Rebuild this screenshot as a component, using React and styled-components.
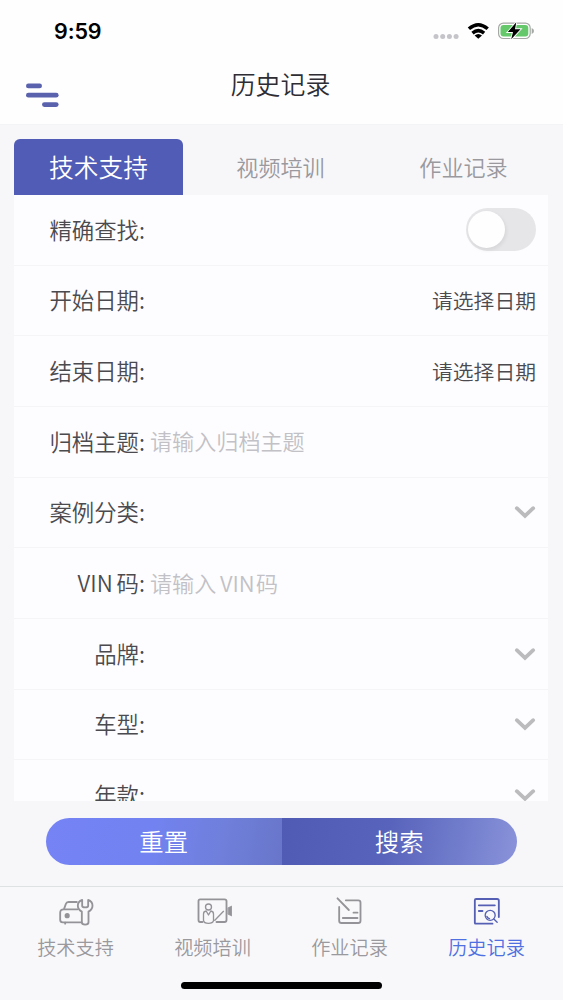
import styled, { createGlobalStyle } from 'styled-components';
import { useState } from 'react';

const GlobalStyle = createGlobalStyle`
  * {
    box-sizing: border-box;
  }
  body {
    margin: 0;
    font-family: 'Noto Sans CJK SC DemiLight', 'Noto Sans CJK SC', sans-serif;
    font-weight: 350;
  }
`;

const Container = styled.div`
  width: 563px;
  height: 1000px;
  display: flex;
  flex-direction: column;
  overflow: hidden;
  background-color: #f7f7fa;
`;

const StatusBar = styled.div`
  height: 62px;
  flex-shrink: 0;
  display: flex;
  justify-content: space-between;
  padding: 0 29px 0 54px;
  background-color: #fefeff;
`;
const Time = styled.span`
  font-family: Inter, sans-serif;
  font-size: 21.5px;
  font-weight: 600;
  line-height: 62px;
  letter-spacing: -0.1px;
  color: #000;
`;
const StatusIcons = styled.svg`
  width: 102px;
  height: 20px;
  margin-top: 21px;
`;

const Header = styled.header`
  height: 63px;
  flex-shrink: 0;
  display: grid;
  grid-template-columns: 80px 1fr 82px;
  background-color: #fefeff;
  border-bottom: 1px solid #f3f4f5;
`;
const MenuButton = styled.button`
  display: flex;
  padding: 21px 0 0 26px;
  border: none;
  background: none;
`;
const Title = styled.h1`
  margin: 0;
  font-size: 24.9px;
  font-weight: 350;
  line-height: 43px;
  text-align: center;
  color: #2e2d33;
`;

const Tabs = styled.div`
  height: 70px;
  flex-shrink: 0;
  display: flex;
  padding: 14px 0 0 14px;
`;
const Tab = styled.button`
  width: ${(props) => (props.$active ? '169px' : '183px')};
  padding: 0 0 2px;
  margin-left: ${(props) => props.$gap || '0'};
  border: none;
  border-radius: 6px 6px 0 0;
  font-family: inherit;
  font-weight: 350;
  font-size: ${(props) => (props.$active ? '24.7px' : '22.1px')};
  color: ${(props) => (props.$active ? '#fff' : '#9a999e')};
  background: ${(props) => (props.$active ? '#505cb5' : 'none')};
`;

const Form = styled.div`
  height: 606px;
  flex-shrink: 0;
  margin: 0 15px 0 14px;
  overflow: hidden;
  background-color: #fdfdff;
`;
const Row = styled.div`
  height: 70.67px;
  display: flex;
  align-items: center;
  padding-right: 12px;
  border-bottom: 1.5px solid #f5f5f8;
`;
const Label = styled.label`
  width: 131px;
  flex-shrink: 0;
  padding-bottom: 2px;
  font-size: 22.4px;
  text-align: right;
  color: #4b4a4e;
`;
const Input = styled.input`
  flex: 1;
  min-width: 0;
  padding: 0 0 3px;
  margin-left: 5px;
  border: none;
  outline: none;
  background: none;
  font-family: inherit;
  font-weight: 350;
  font-size: 22.1px;
  color: #4b4a4e;
  &::placeholder {
    color: #c2c1c6;
    opacity: 1;
  }
`;
const DateValue = styled.span`
  margin-left: auto;
  font-size: 20.8px;
  color: #4b4a4e;
`;
const Arrow = styled.svg`
  width: 22px;
  height: 14px;
  margin-left: auto;
`;
const Switch = styled.button`
  width: 70px;
  height: 43px;
  display: flex;
  justify-content: ${(props) => (props.$on ? 'flex-end' : 'flex-start')};
  padding: 3px 2px;
  margin-left: auto;
  border: none;
  border-radius: 22px;
  background-color: ${(props) => (props.$on ? '#505cb5' : '#e6e5e8')};
`;
const Knob = styled.span`
  width: 37px;
  height: 37px;
  border-radius: 50%;
  background-color: #fefefe;
  box-shadow: 1px 2px 4px rgba(0, 0, 0, 0.08);
`;

const Actions = styled.div`
  height: 85px;
  flex-shrink: 0;
  padding: 17px 46px 0;
  display: flex;
`;
const Button = styled.button`
  flex: 1;
  height: 47px;
  padding: 0 0 2px;
  border: none;
  font-family: inherit;
  font-weight: 350;
  font-size: 24.4px;
  color: #fff;
`;
const ResetButton = styled(Button)`
  border-radius: 24px 0 0 24px;
  background: linear-gradient(100deg, #7583f5 0%, #7282f0 45%, #6f7fda 75%, #6875c9 100%);
`;
const SearchButton = styled(Button)`
  border-radius: 0 24px 24px 0;
  background: linear-gradient(100deg, #505cb3 0%, #5863bb 45%, #717dcc 75%, #8a93da 100%);
`;

const NavBar = styled.nav`
  flex: 1;
  display: flex;
  flex-direction: column;
  border-top: 1px solid #dfe2e3;
  background-color: #f8f8fb;
`;
const NavItems = styled.div`
  height: 95px;
  display: flex;
  padding: 10px 8px 0 7px;
`;
const NavItem = styled.a`
  flex: 1;
  display: flex;
  flex-direction: column;
  align-items: center;
  color: ${(props) => (props.$active ? '#4f70e0' : '#9a999d')};
`;
const NavIcon = styled.svg`
  width: 38px;
  height: 30px;
  fill: none;
  stroke: ${(props) => (props.$active ? '#5560b4' : '#949397')};
  stroke-width: 5.5;
  stroke-linecap: round;
  stroke-linejoin: round;
`;
const NavText = styled.span`
  font-size: 19.2px;
  line-height: 28px;
  margin-top: 6px;
`;
const HomeIndicator = styled.div`
  width: 201px;
  height: 7px;
  margin: 0 auto;
  border-radius: 4px;
  background-color: #000;
`;

const fields = [
  { label: '精确查找', type: 'switch' },
  { label: '开始日期', type: 'date' },
  { label: '结束日期', type: 'date' },
  { label: '归档主题', type: 'input', placeholder: '请输入归档主题' },
  { label: '案例分类', type: 'select' },
  { label: 'VIN\u2006码', type: 'input', placeholder: '请输入\u2006VIN\u200a码' },
  { label: '品牌', type: 'select' },
  { label: '车型', type: 'select' },
  { label: '年款', type: 'select' },
];

const navs = [
  {
    text: '技术支持',
    viewBox: '169.5 51 114 90',
    icon: (
      <>
        <path d='M229 66 H204 Q198 66 196 72 L191 86' />
        <path d='M231 88 H190 Q179 88 179 98 V119 Q179 127 187 127 H243' />
        <path d='M194 128 V131' />
        <circle cx='200' cy='107' r='5' fill='#949397' />
        <path d='M245 60 Q232 64 232 77 Q232 88 244 95 V127 Q244 134 254 134 Q264 134 264 127 V95 Q276 88 276 77 Q276 64 263 60 V77 Q263 82 254 82 Q245 82 245 77 Z' />
      </>
    ),
  },
  {
    text: '视频培训',
    viewBox: '580.5 51 114 90',
    icon: (
      <>
        <path d='M606 126 H599 Q594 126 594 120 V63 Q594 58 599 58 H672 Q678 58 678 63 V120 Q678 126 672 126 H648' />
        <circle cx='624' cy='81' r='9' strokeWidth='4' />
        <path
          d='M617 93 Q609 94 609 102 V121 Q610 130 624 130 Q637 130 639 122 V102 Q639 94 631 93 L624 105 Z M643 121 L669 94'
          strokeWidth='4'
        />
        <path d='M683 83 L694 78 V108 L683 103 Z' fill='#949397' strokeWidth='2' />
      </>
    ),
  },
  {
    text: '作业记录',
    viewBox: '148.5 51 114 90',
    icon: (
      <>
        <path d='M168 55 L202 90' />
        <path d='M193 61 H230 Q237 61 237 68 V122 Q237 129 230 129 H180 Q173 129 173 122 V81' />
        <path d='M184 114 H228 M216 98 H228' />
      </>
    ),
  },
  {
    text: '历史记录',
    viewBox: '559.5 51 114 90',
    active: true,
    icon: (
      <>
        <path d='M633 131 H582 Q580 131 580 128 V61 Q580 57 584 57 H647 Q652 57 652 62 V111' />
        <path d='M592 76 H640 M592 93 H603' />
        <circle cx='626' cy='106' r='15' strokeWidth='4' />
        <path d='M637 117 L647 127 M616 109 Q618 115 624 116' strokeWidth='4' />
      </>
    ),
  },
];

const App = () => {
  const [exact, setExact] = useState(false);

  return (
    <Container>
      <GlobalStyle />
      <StatusBar>
        <Time>9:59</Time>
        <StatusIcons viewBox='432 21 102 20'>
          <g fill='#c5c4c9'>
            <circle cx='436' cy='36.5' r='2.5' />
            <circle cx='442.7' cy='36.5' r='2.5' />
            <circle cx='449.4' cy='36.5' r='2.5' />
            <circle cx='456.1' cy='36.5' r='2.5' />
          </g>
          <g fill='none' stroke='#000' strokeWidth='3.5'>
            <path d='M468.9 28.8 Q478.3 20.6 487.7 28.8' />
            <path d='M472.5 33.1 Q478.3 28.2 484.1 33.1' />
          </g>
          <path d='M478.3 38.8 L474.6 35.5 Q478.3 32.4 482 35.5 Z' fill='#000' />
          <rect x='498.6' y='23.1' width='31.6' height='15.4' rx='4.8' fill='#fff' stroke='#a5a8a5' strokeWidth='1.2' />
          <rect x='500.5' y='25' width='27.8' height='11.6' rx='3' fill='#65c96c' />
          <path d='M531.7 28 Q534 29 534 31 Q534 33 531.7 34 Z' fill='#a5a8a5' />
          <path
            d='M516.3 22.3 L507.8 32.1 H513 L511.2 39.3 L520.5 29.2 H515 Z'
            fill='#000'
            stroke='#fff'
            strokeWidth='1.8'
            paintOrder='stroke'
          />
        </StatusIcons>
      </StatusBar>

      <Header>
        <MenuButton aria-label='菜单'>
          <svg width='33' height='24' viewBox='0 0 33 24' fill='#5a62ae'>
            <rect x='0' y='0.5' width='16' height='4.8' rx='2.4' />
            <rect x='0' y='9.8' width='32.6' height='4.8' rx='2.4' />
            <rect x='16' y='19.2' width='16.6' height='4.8' rx='2.4' />
          </svg>
        </MenuButton>
        <Title>历史记录</Title>
      </Header>

      <Tabs>
        <Tab $active>技术支持</Tab>
        <Tab $gap='6px'>视频培训</Tab>
        <Tab>作业记录</Tab>
      </Tabs>

      <Form>
        {fields.map((field) => (
          <Row key={field.label}>
            <Label>{field.label}:</Label>
            {field.type === 'switch' && (
              <Switch $on={exact} onClick={() => setExact(!exact)}>
                <Knob />
              </Switch>
            )}
            {field.type === 'date' && <DateValue>请选择日期</DateValue>}
            {field.type === 'input' && <Input placeholder={field.placeholder} />}
            {field.type === 'select' && (
              <Arrow viewBox='0 0 22 14' fill='none' stroke='#bbbabd' strokeWidth='3.8' strokeLinecap='round'>
                <path d='M2.8 3.2 L11 10.8 L19.2 3.2' />
              </Arrow>
            )}
          </Row>
        ))}
      </Form>

      <Actions>
        <ResetButton>重置</ResetButton>
        <SearchButton>搜索</SearchButton>
      </Actions>

      <NavBar>
        <NavItems>
          {navs.map((nav) => (
            <NavItem key={nav.text} $active={nav.active}>
              <NavIcon viewBox={nav.viewBox} $active={nav.active}>
                {nav.icon}
              </NavIcon>
              <NavText>{nav.text}</NavText>
            </NavItem>
          ))}
        </NavItems>
        <HomeIndicator />
      </NavBar>
    </Container>
  );
};

export default App;
